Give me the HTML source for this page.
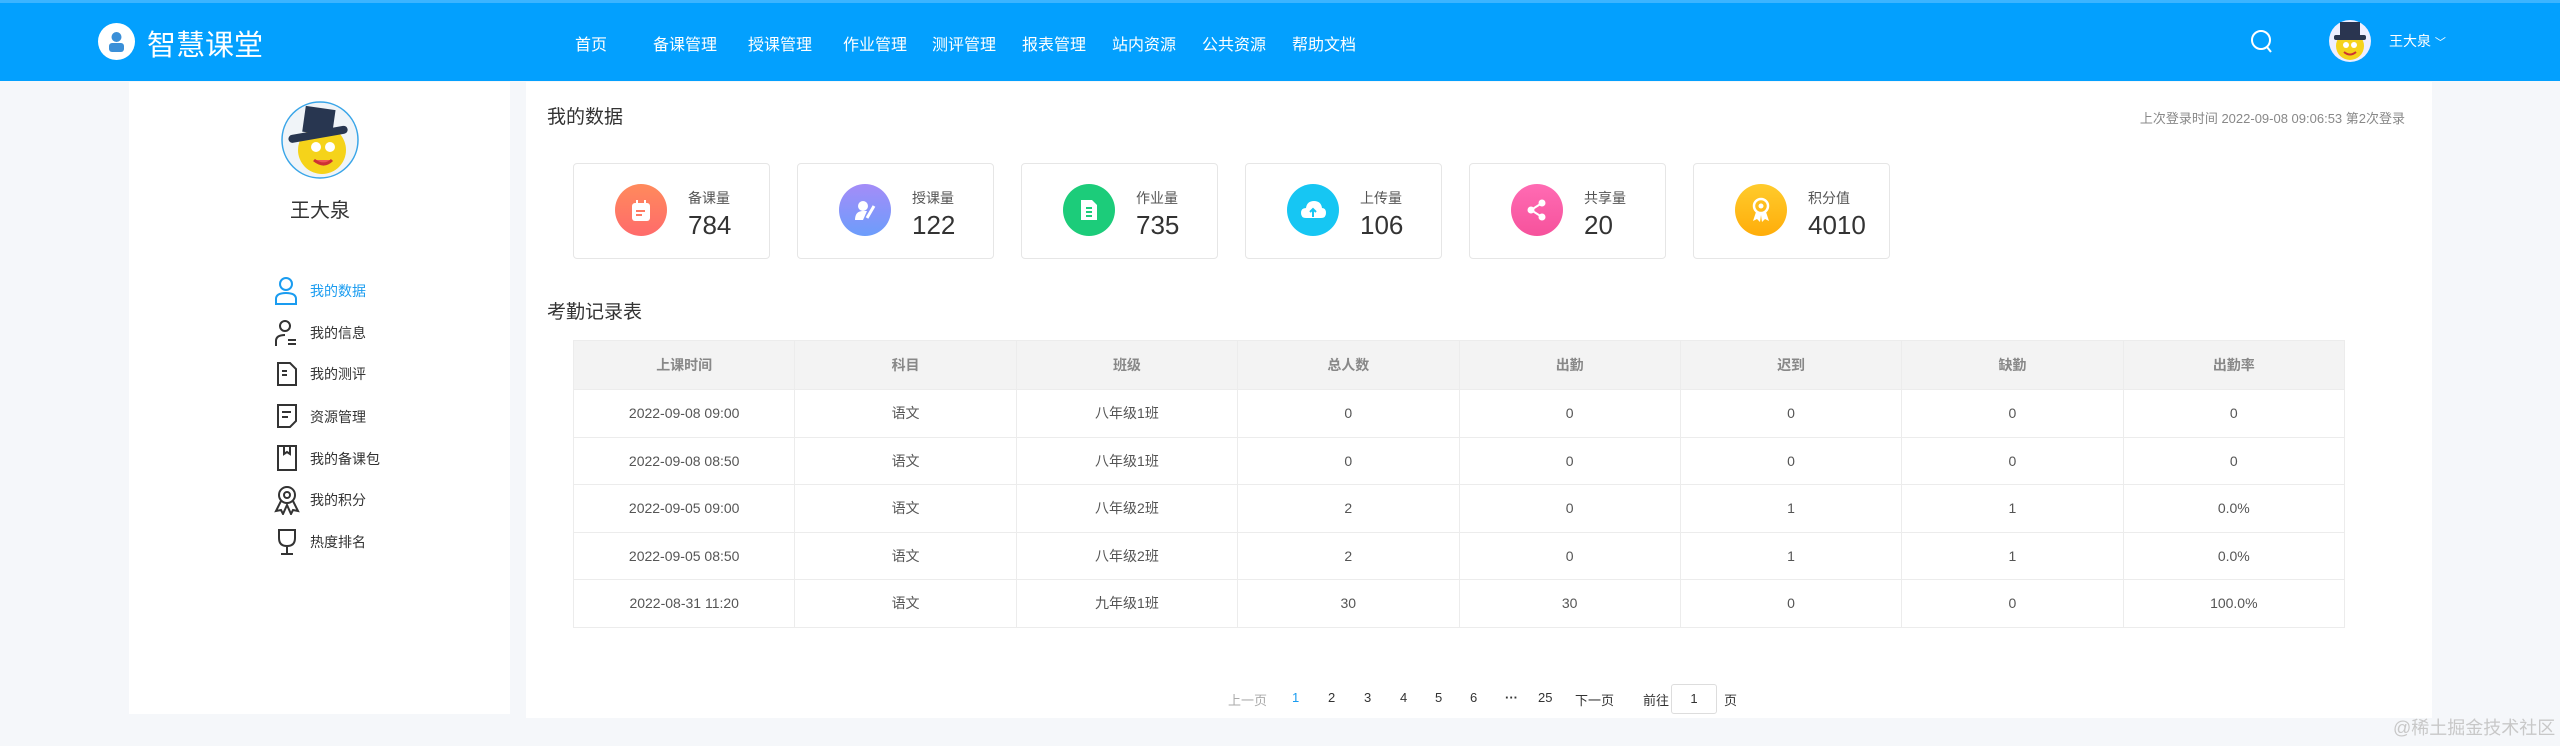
<!DOCTYPE html>
<html><head><meta charset="utf-8"><style>
*{margin:0;padding:0;box-sizing:border-box}
body{width:2560px;height:746px;background:#f5f7fa;font-family:"Liberation Sans","Noto Sans CJK SC",sans-serif;position:relative;overflow:hidden;color:#333}
.a{position:absolute;white-space:nowrap}
.hdr{position:absolute;left:0;top:0;width:2560px;height:81px;background:#03a0fe;border-top:3px solid #3cb4ff}
.nav{color:#fff;font-size:16px;top:31px}
.panel{position:absolute;background:#fff}
.menu{font-size:14px;color:#333}
.card{position:absolute;top:163px;width:197px;height:96px;border:1px solid #e6e6e6;border-radius:4px;background:#fff}
.card .ic{position:absolute;left:41px;top:20px;width:52px;height:52px;border-radius:50%}
.card .lb{position:absolute;left:114px;top:24px;font-size:14px;color:#555}
.card .nm{position:absolute;left:114px;top:46px;font-size:26px;color:#333}
table{position:absolute;left:573px;top:340px;width:1772px;border-collapse:collapse;font-size:14px;table-layout:fixed}
th{height:49px;background:#f3f3f3;color:#888;font-weight:bold;border:1px solid #ececec}
td{height:47.5px;text-align:center;color:#555;border:1px solid #ececec}
.pg{top:690px;font-size:13px;color:#333}
</style></head><body>
<div class="hdr"></div>
<div class="a" style="left:98px;top:23px;width:37px;height:37px;border-radius:50%;background:#fff"></div>
<svg class="a" style="left:98px;top:23px" width="37" height="37" viewBox="0 0 37 37"><circle cx="18.5" cy="14" r="5" fill="#3a8fd8"/><rect x="11" y="20" width="15" height="9" rx="3" fill="#3a8fd8"/></svg>
<div class="a" style="left:147px;top:22px;font-size:29px;color:#fff">智慧课堂</div>
<div class="a nav" style="left:575px">首页</div>
<div class="a nav" style="left:653px">备课管理</div>
<div class="a nav" style="left:748px">授课管理</div>
<div class="a nav" style="left:843px">作业管理</div>
<div class="a nav" style="left:932px">测评管理</div>
<div class="a nav" style="left:1022px">报表管理</div>
<div class="a nav" style="left:1112px">站内资源</div>
<div class="a nav" style="left:1202px">公共资源</div>
<div class="a nav" style="left:1292px">帮助文档</div>
<svg class="a" style="left:2250px;top:29px" width="24" height="26" viewBox="0 0 24 26"><circle cx="11" cy="11" r="9" fill="none" stroke="#fff" stroke-width="2"/><path d="M17 18l4 5" stroke="#fff" stroke-width="2"/></svg>
<svg class="a" style="left:2328px;top:19px" width="44" height="44" viewBox="0 0 44 44"><circle cx="22" cy="22" r="21" fill="#eef"/><circle cx="22" cy="27" r="14" fill="#f5d31a"/><rect x="12" y="3" width="20" height="15" fill="#2a3550"/><rect x="6" y="16" width="32" height="5" rx="2" fill="#2a3550"/><circle cx="18" cy="26" r="3" fill="#fff"/><circle cx="26" cy="26" r="3" fill="#fff"/><path d="M16 33q6 5 12 0" stroke="#c33" stroke-width="2" fill="none"/></svg>
<div class="a" style="left:2389px;top:31px;font-size:14px;color:#fff">王大泉 <span style="font-size:11px">﹀</span></div>

<div class="panel" style="left:129px;top:82px;width:381px;height:632px"></div>
<div class="panel" style="left:526px;top:82px;width:1906px;height:636px"></div>

<svg class="a" style="left:280px;top:100px" width="80" height="80" viewBox="0 0 80 80"><circle cx="40" cy="40" r="38" fill="#f0f4f8" stroke="#39a5e8" stroke-width="1.5"/><circle cx="42" cy="50" r="24" fill="#f5d31a"/><rect x="24" y="8" width="30" height="26" fill="#283650" transform="rotate(8 40 20)"/><rect x="8" y="30" width="60" height="8" rx="4" fill="#283650" transform="rotate(-10 40 34)"/><circle cx="36" cy="47" r="5" fill="#fff"/><circle cx="50" cy="47" r="5" fill="#fff"/><path d="M34 60q10 8 18 0" stroke="#c33" stroke-width="3" fill="#e55"/></svg>
<div class="a" style="left:290px;top:194px;font-size:20px;color:#333">王大泉</div>

<svg class="a" style="left:274px;top:276px" width="24" height="30" viewBox="0 0 24 30"><circle cx="12" cy="8" r="6" fill="none" stroke="#1a9cf0" stroke-width="2"/><path d="M2 28v-5q0-6 10-6t10 6v5z" fill="none" stroke="#1a9cf0" stroke-width="2"/></svg>
<div class="a menu" style="left:310px;top:281px;color:#1a9cf0">我的数据</div>
<svg class="a" style="left:274px;top:318px" width="24" height="30" viewBox="0 0 24 30"><circle cx="11" cy="8" r="5" fill="none" stroke="#333" stroke-width="2"/><path d="M2 28v-5q0-6 9-6M14 22h8M14 26h8" fill="none" stroke="#333" stroke-width="2"/></svg>
<div class="a menu" style="left:310px;top:323px">我的信息</div>
<svg class="a" style="left:276px;top:361px" width="22" height="26" viewBox="0 0 22 26"><path d="M2 2h12l6 6v16h-18z M6 10h5M6 14h5" fill="none" stroke="#333" stroke-width="2"/></svg>
<div class="a menu" style="left:310px;top:364px">我的测评</div>
<svg class="a" style="left:276px;top:403px" width="22" height="26" viewBox="0 0 22 26"><path d="M2 2h18v16l-6 6h-12z M6 9h9M6 14h6" fill="none" stroke="#333" stroke-width="2"/></svg>
<div class="a menu" style="left:310px;top:407px">资源管理</div>
<svg class="a" style="left:276px;top:444px" width="22" height="28" viewBox="0 0 22 28"><path d="M2 2h18v24h-18z M8 2v8l3-2 3 2v-8" fill="none" stroke="#333" stroke-width="2"/></svg>
<div class="a menu" style="left:310px;top:449px">我的备课包</div>
<svg class="a" style="left:274px;top:485px" width="26" height="30" viewBox="0 0 26 30"><circle cx="13" cy="10" r="8" fill="none" stroke="#333" stroke-width="2"/><circle cx="13" cy="10" r="3" fill="none" stroke="#333" stroke-width="2"/><path d="M7 16l-5 10 5-1 2 4 4-9 4 9 2-4 5 1-5-10" fill="none" stroke="#333" stroke-width="2"/></svg>
<div class="a menu" style="left:310px;top:490px">我的积分</div>
<svg class="a" style="left:274px;top:527px" width="26" height="30" viewBox="0 0 26 30"><path d="M5 3h16v8q0 8-8 8t-8-8z M13 19v7M7 27h12" fill="none" stroke="#333" stroke-width="2"/></svg>
<div class="a menu" style="left:310px;top:532px">热度排名</div>

<div class="a" style="left:547px;top:102px;font-size:19px;color:#333">我的数据</div>
<div class="a" style="left:2405px;top:108px;font-size:13px;color:#888;transform:translateX(-100%)">上次登录时间 2022-09-08 09:06:53 第2次登录</div>

<div class="card" style="left:573px"><div class="ic" style="background:linear-gradient(#ff8a5c,#ff6b6b)"></div><svg class="a" style="left:56px;top:35px" width="22" height="24"><rect x="2" y="4" width="18" height="18" rx="3" fill="#fff"/><rect x="6" y="1" width="2" height="6" fill="#fff"/><rect x="14" y="1" width="2" height="6" fill="#fff"/><path d="M6 12h9M6 16h6" stroke="#ff7a63" stroke-width="2"/></svg><div class="lb">备课量</div><div class="nm">784</div></div>
<div class="card" style="left:797px"><div class="ic" style="background:linear-gradient(#a48cf8,#6c9dfb)"></div><svg class="a" style="left:55px;top:34px" width="24" height="24"><circle cx="10" cy="8" r="5" fill="#fff"/><path d="M2 22q0-9 8-9l4 0-4 9z" fill="#fff"/><path d="M14 20l7-12" stroke="#fff" stroke-width="3"/></svg><div class="lb">授课量</div><div class="nm">122</div></div>
<div class="card" style="left:1021px"><div class="ic" style="background:#1ccc7a"></div><svg class="a" style="left:57px;top:34px" width="20" height="24"><path d="M2 2h11l5 5v15h-16z" fill="#fff"/><path d="M7 10h6M7 14h6M7 18h6" stroke="#1ccc7a" stroke-width="2"/></svg><div class="lb">作业量</div><div class="nm">735</div></div>
<div class="card" style="left:1245px"><div class="ic" style="background:#16c6f3"></div><svg class="a" style="left:54px;top:34px" width="26" height="24"><path d="M6 20q-5 0-5-5t5-5q1-7 8-7t8 7q4 0 4 5t-5 5z" fill="#fff"/><path d="M13 19v-8M10 14l3-3 3 3" stroke="#16c6f3" stroke-width="2" fill="none"/></svg><div class="lb">上传量</div><div class="nm">106</div></div>
<div class="card" style="left:1469px"><div class="ic" style="background:linear-gradient(#ff6bb3,#f6529c)"></div><svg class="a" style="left:55px;top:34px" width="24" height="24"><circle cx="17" cy="5" r="3.5" fill="#fff"/><circle cx="6" cy="12" r="3.5" fill="#fff"/><circle cx="17" cy="19" r="3.5" fill="#fff"/><path d="M17 5l-11 7 11 7" stroke="#fff" stroke-width="2" fill="none"/></svg><div class="lb">共享量</div><div class="nm">20</div></div>
<div class="card" style="left:1693px"><div class="ic" style="background:linear-gradient(#ffcb2c,#ffad0a)"></div><svg class="a" style="left:55px;top:33px" width="24" height="26"><circle cx="12" cy="9" r="7" fill="none" stroke="#fff" stroke-width="2.5"/><circle cx="12" cy="9" r="2.5" fill="#fff"/><path d="M7 15l-3 9 4-2 3 3 1-7 1 7 3-3 4 2-3-9" fill="#fff"/></svg><div class="lb">积分值</div><div class="nm">4010</div></div>

<div class="a" style="left:547px;top:297px;font-size:19px;color:#333">考勤记录表</div>
<table>
<colgroup><col><col><col><col><col><col><col><col></colgroup>
<tr><th>上课时间</th><th>科目</th><th>班级</th><th>总人数</th><th>出勤</th><th>迟到</th><th>缺勤</th><th>出勤率</th></tr>
<tr><td>2022-09-08 09:00</td><td>语文</td><td>八年级1班</td><td>0</td><td>0</td><td>0</td><td>0</td><td>0</td></tr>
<tr><td>2022-09-08 08:50</td><td>语文</td><td>八年级1班</td><td>0</td><td>0</td><td>0</td><td>0</td><td>0</td></tr>
<tr><td>2022-09-05 09:00</td><td>语文</td><td>八年级2班</td><td>2</td><td>0</td><td>1</td><td>1</td><td>0.0%</td></tr>
<tr><td>2022-09-05 08:50</td><td>语文</td><td>八年级2班</td><td>2</td><td>0</td><td>1</td><td>1</td><td>0.0%</td></tr>
<tr><td>2022-08-31 11:20</td><td>语文</td><td>九年级1班</td><td>30</td><td>30</td><td>0</td><td>0</td><td>100.0%</td></tr>
</table>

<div class="a pg" style="left:1228px;color:#aaa">上一页</div>
<div class="a pg" style="left:1292px;color:#1a9cf0">1</div>
<div class="a pg" style="left:1328px">2</div>
<div class="a pg" style="left:1364px">3</div>
<div class="a pg" style="left:1400px">4</div>
<div class="a pg" style="left:1435px">5</div>
<div class="a pg" style="left:1470px">6</div>
<div class="a pg" style="left:1505px;font-weight:bold">···</div>
<div class="a pg" style="left:1538px">25</div>
<div class="a pg" style="left:1575px">下一页</div>
<div class="a pg" style="left:1643px">前往</div>
<div class="a" style="left:1671px;top:684px;width:46px;height:30px;border:1px solid #ddd;border-radius:3px;font-size:13px;text-align:center;line-height:28px">1</div>
<div class="a pg" style="left:1724px">页</div>
<div class="a" style="left:2393px;top:714px;font-size:18px;color:#c8c8c8">@稀土掘金技术社区</div>
</body></html>
